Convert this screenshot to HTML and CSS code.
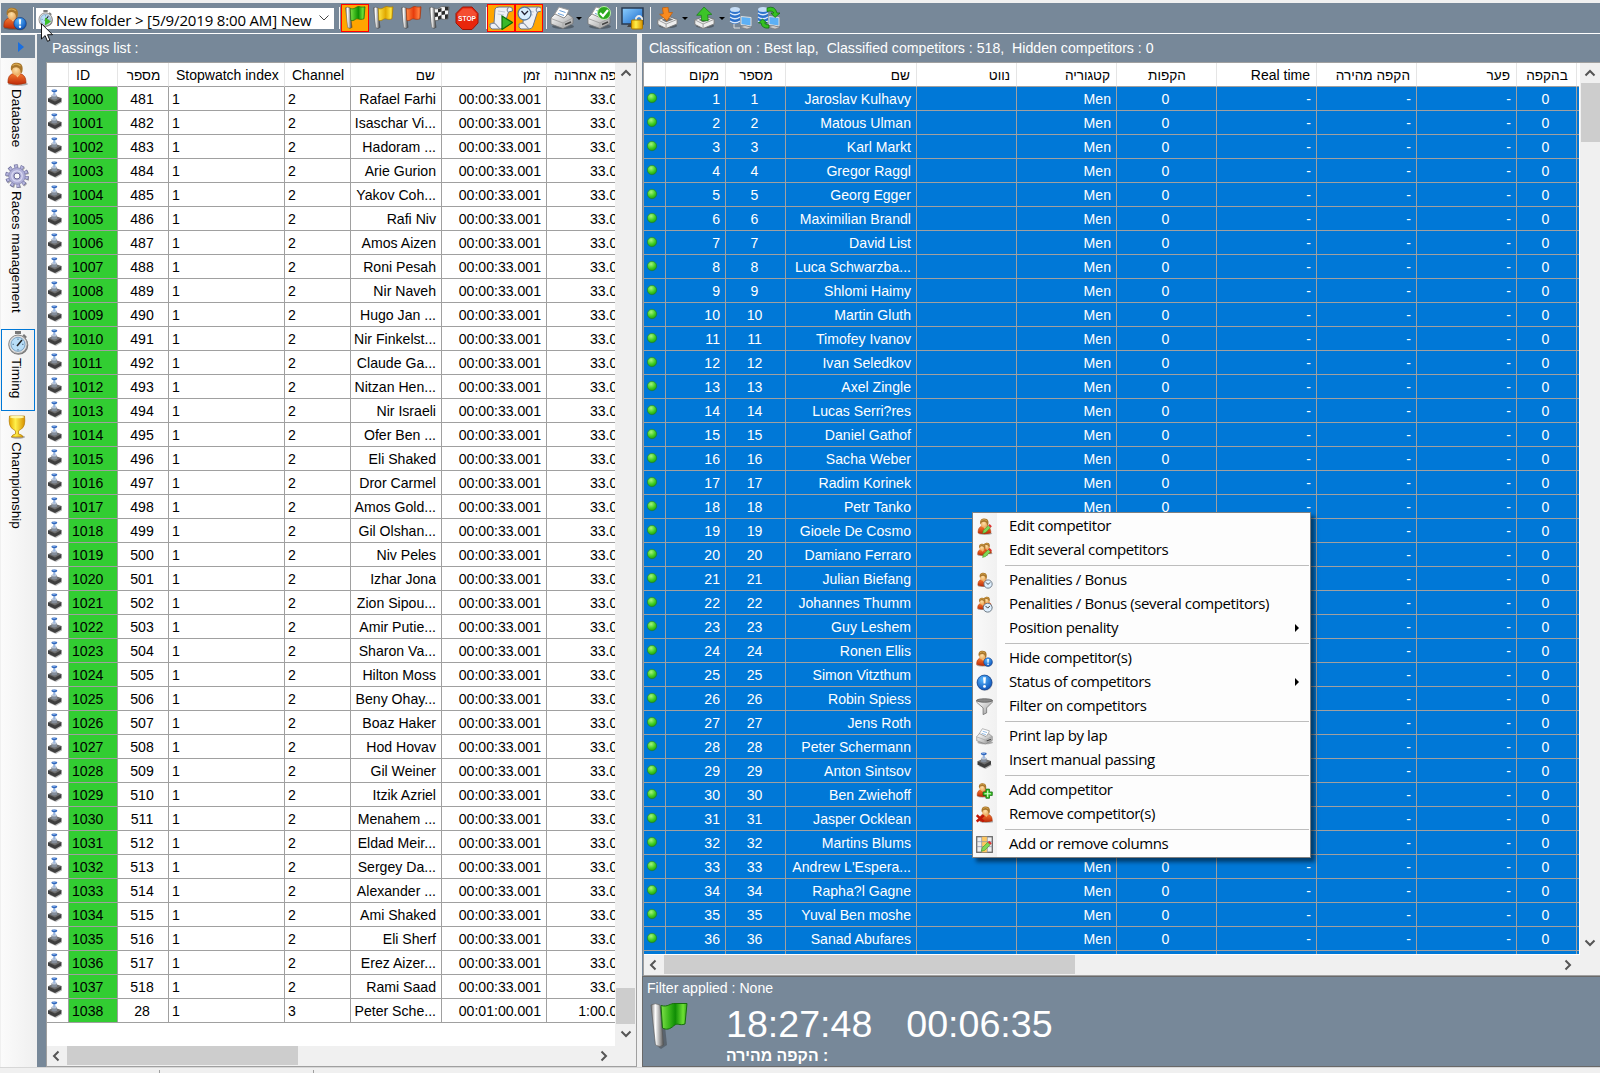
FILE: index.html
```
<!DOCTYPE html>
<html lang="en">
<head>
<meta charset="utf-8">
<title>Race timing</title>
<link rel="stylesheet" href="styles.css">
</head>
<body>
<svg class="defs" width="0" height="0" aria-hidden="true">
  <defs>
    <linearGradient id="gBody" x1="0" y1="0" x2="0" y2="1"><stop offset="0" stop-color="#f47a30"/><stop offset="1" stop-color="#c02a08"/></linearGradient>
    <radialGradient id="gFace" cx=".45" cy=".5" r=".6"><stop offset="0" stop-color="#fde0a8"/><stop offset="1" stop-color="#e8a050"/></radialGradient>
    <linearGradient id="gPole" x1="0" y1="0" x2="1" y2="0"><stop offset="0" stop-color="#777"/><stop offset=".35" stop-color="#fff"/><stop offset="1" stop-color="#555"/></linearGradient>
    <linearGradient id="gGreen" x1="0" y1="0" x2="1" y2="0"><stop offset="0" stop-color="#7fe04a"/><stop offset=".3" stop-color="#3cb81c"/><stop offset=".55" stop-color="#0f8d05"/><stop offset=".85" stop-color="#6de035"/><stop offset="1" stop-color="#38a81a"/></linearGradient>
    <linearGradient id="gYellow" x1="0" y1="0" x2="1" y2="0"><stop offset="0" stop-color="#ffe74a"/><stop offset=".5" stop-color="#e0a800"/><stop offset=".85" stop-color="#ffe440"/><stop offset="1" stop-color="#d9a400"/></linearGradient>
    <linearGradient id="gOrange" x1="0" y1="0" x2="1" y2="0"><stop offset="0" stop-color="#ff8a45"/><stop offset=".5" stop-color="#e83c0c"/><stop offset=".85" stop-color="#ff8040"/><stop offset="1" stop-color="#d84010"/></linearGradient>
    <radialGradient id="gBlue" cx=".4" cy=".3" r=".8"><stop offset="0" stop-color="#5ab8ff"/><stop offset="1" stop-color="#0548b0"/></radialGradient>
    <radialGradient id="gDot" cx=".4" cy=".3" r=".75"><stop offset="0" stop-color="#a4f57c"/><stop offset=".6" stop-color="#3fcc22"/><stop offset="1" stop-color="#1c9a10"/></radialGradient>
    <linearGradient id="gSteel" x1="0" y1="0" x2="1" y2="1"><stop offset="0" stop-color="#fff"/><stop offset="1" stop-color="#9a9a9a"/></linearGradient>
    <linearGradient id="gScreen" x1="0" y1="0" x2="1" y2="1"><stop offset="0" stop-color="#8ed0ff"/><stop offset="1" stop-color="#1766c8"/></linearGradient>
    <linearGradient id="gGold" x1="0" y1="0" x2="1" y2="0"><stop offset="0" stop-color="#e8a800"/><stop offset=".4" stop-color="#fff04a"/><stop offset="1" stop-color="#d89000"/></linearGradient>

    <symbol id="person" viewBox="0 0 24 24">
      <ellipse cx="13" cy="22" rx="10" ry="1.800" fill="#000" opacity=".3"/>
      <path d="M3 21c-.3-6 2-9 6-9.500h5c4.500.5 7 3.500 7 9.500q-9 3-18 0z" fill="url(#gBody)" stroke="#a83208" stroke-width=".7"/>
      <path d="M9.500 11.500l3 4 3-4z" fill="#f5c080"/>
      <ellipse cx="11.500" cy="7.500" rx="5" ry="6" fill="url(#gFace)"/>
      <path d="M6 8C5 2 9 .5 12 .7c5 .1 6.500 4 5.300 9-.8 2-1.500 2-1.700.8.1-3-1.600-5-4.300-5.200C8.500 5.500 7.500 6 7 8.500z" fill="#a8762c"/>
      <path d="M7.500 3.500q4-3 8 .5" stroke="#d8a850" stroke-width="1.200" fill="none"/>
    </symbol>
    <symbol id="alert" viewBox="0 0 24 24">
      <circle cx="12.500" cy="12.800" r="11" fill="#000" opacity=".25"/>
      <circle cx="12" cy="12" r="10.500" fill="url(#gBlue)" stroke="#0a3c8c"/>
      <path d="M10 4.500h4l-.7 9h-2.600z" fill="#fff"/><circle cx="12" cy="17.500" r="2" fill="#fff"/>
    </symbol>
    <symbol id="clock" viewBox="0 0 24 24">
      <circle cx="12" cy="12" r="10" fill="#dff0ff" stroke="#6a7682" stroke-width="2.200"/>
      <path d="M7 8l5 5 5-5" fill="none" stroke="#222" stroke-width="2"/>
    </symbol>
    <symbol id="people" viewBox="0 0 24 24">
      <use href="#person" x="7" y="0" width="17" height="18"/><use href="#person" x="0" y="1" width="18" height="20"/>
    </symbol>
    <symbol id="pencil" viewBox="0 0 24 24">
      <path d="M2 22l2-7L15 4l5 5L9 20z" fill="#7fd857" stroke="#2d8a18"/><path d="M15 4l3-3 5 5-3 3z" fill="#e03030"/>
    </symbol>
    <symbol id="flagpole" viewBox="0 0 24 24">
      <path d="M3.500 3.500L7 3l2.500 18.500-3 1.500z" fill="#000" opacity=".35"/>
      <path d="M2.500 1.800q2-1.200 4.500 0l1.500 19.700q-2 1.500-3.800 0z" fill="url(#gPole)" stroke="#555" stroke-width=".5"/>
    </symbol>
    <path id="cloth" d="M7.300 2.300c3.700 2 5.700-2 8.700-1.800 2.300.5 3.500.8 6 .3l-1 12c-5 1.700-6-1-8.500.5-2 1.500-3.500 1.500-4.700 1z"/>
    <symbol id="flag-green" viewBox="0 0 24 24"><use href="#flagpole"/><use href="#cloth" fill="url(#gGreen)" stroke="#17700c" stroke-width=".7"/></symbol>
    <symbol id="flag-yellow" viewBox="0 0 24 24"><use href="#flagpole"/><use href="#cloth" fill="url(#gYellow)" stroke="#a97c00" stroke-width=".7"/></symbol>
    <symbol id="flag-orange" viewBox="0 0 24 24"><use href="#flagpole"/><use href="#cloth" fill="url(#gOrange)" stroke="#a83408" stroke-width=".7"/></symbol>
    <symbol id="flag-check" viewBox="0 0 24 24"><use href="#flagpole"/><use href="#cloth" fill="#f4f4f4" stroke="#555" stroke-width=".7"/>
      <path d="M11 3l3.500-1v3.500L11 6.500zM18 .8l3.500.2v3.500L18 4.500zM7.700 6.500l3.300 0v4l-3 .5zM14.500 5.500L18 4.500v4l-3.500.5zM11 10.500l3.500-1.500v3.700l-3.500 1zM18 8.500l3-.2-.2 4.500-2.800.2z" fill="#2c2c2c"/></symbol>
    <symbol id="stop" viewBox="0 0 24 24">
      <path d="M7.500 1h9.500l6 6.500v9.500l-6 6.500h-9.500L1 17V7.500z" fill="#e8260c" stroke="#a01404"/>
      <path d="M8 2.500h8.500l5 5V10H2.500V8z" fill="#ff7050" opacity=".55"/>
      <text x="12" y="15" text-anchor="middle" font-family="Liberation Sans, sans-serif" font-size="7.500" font-weight="bold" fill="#fff" textLength="18" lengthAdjust="spacingAndGlyphs">STOP</text>
    </symbol>
    <symbol id="scroll" viewBox="0 0 24 24">
      <path d="M6 3q1-2 4-2h11q3 0 2.500 4l-4 1L15 20q-1 3-4 3H3q-3-1-2-5l4-1z" fill="#eef1f6" stroke="#6b7486"/>
      <path d="M1 18q4-2 6 .500t4 4.500M19 6q-2-3 1-4.700" fill="none" stroke="#8a93a5" stroke-width="1.200"/>
      <path d="M9 5l7 1M8.500 8l6.500 1" stroke="#c2c9d8"/>
    </symbol>
    <symbol id="scroll-play" viewBox="0 0 24 24"><use href="#scroll"/><path d="M13 10l10.500 6.500L13 23.500z" fill="#38b828" stroke="#0b6e08" stroke-width="1.200"/></symbol>
    <symbol id="scroll-clock" viewBox="0 0 24 24"><use href="#scroll" x="1" y="0"/><circle cx="7.500" cy="7.500" r="6.500" fill="#d8efff" stroke="#5a7898" stroke-width="1.300"/><path d="M4.500 5l3 3.500L11 5" fill="none" stroke="#223" stroke-width="1.300"/></symbol>
    <symbol id="printer" viewBox="0 0 24 24">
      <ellipse cx="13" cy="20.500" rx="11" ry="2.500" fill="#000" opacity=".3"/>
      <path d="M4 9l5-8 10 3-4 9z" fill="#fff" stroke="#999"/><path d="M9.500 4.500l6 2M8 7.500l6 2" stroke="#6aa0d8"/>
      <path d="M1 12l4-4 9 4 4-4 5 4v5.500L13 22.500 1 18z" fill="url(#gSteel)" stroke="#777" stroke-width=".8"/>
      <path d="M1 12.500l12 4.500 10-5" fill="none" stroke="#999" stroke-width=".8"/><path d="M13 17v5" stroke="#aaa"/>
      <path d="M15 18.500l6-2.500" stroke="#444" stroke-width="1.500"/>
    </symbol>
    <symbol id="printer-ok" viewBox="0 0 24 24"><use href="#printer"/><circle cx="17" cy="7" r="6.500" fill="#2ca81c" stroke="#b8f0a8"/><path d="M13 7l3 3 5-6" fill="none" stroke="#fff" stroke-width="2.200"/></symbol>
    <symbol id="display-lock" viewBox="0 0 24 24">
      <path d="M1 2h21v16H1z" fill="url(#gScreen)" stroke="#2a3a50" stroke-width="1.500"/><path d="M6 21l2-3h6v3z" fill="#444"/>
      <path d="M15 14v-2q3-4 6 0v2" fill="none" stroke="#eee" stroke-width="1.800"/><rect x="10.500" y="14" width="11" height="9" rx="1" fill="url(#gGold)" stroke="#a87800"/>
    </symbol>
    <symbol id="tray" viewBox="0 0 24 24">
      <ellipse cx="13" cy="20.500" rx="10" ry="2.500" fill="#000" opacity=".3"/>
      <path d="M2 14l11-4 10 3.500v5L11 23.500 2 19z" fill="#eee" stroke="#777"/><path d="M2 14l9 4.500 12-5M11 18.500v5" fill="none" stroke="#999"/><path d="M6 14l7-2.800 6 2.300-8 3z" fill="#777"/>
    </symbol>
    <symbol id="tray-down" viewBox="0 0 24 24"><use href="#tray"/><path d="M7 1l6-1 1 6h4l-6 9-8-7 4-.5z" fill="#f98a20" stroke="#c05c08" stroke-width=".8"/></symbol>
    <symbol id="tray-up" viewBox="0 0 24 24"><use href="#tray"/><path d="M12 0l8.500 8-4.500.5.500 6.500H9.500L9 9H4z" fill="#3cc428" stroke="#158010" stroke-width=".8"/></symbol>
    <symbol id="server" viewBox="0 0 24 24">
      <path d="M1 3v13q5 4 10 0V3z" fill="#2d72cc"/><ellipse cx="6" cy="3.500" rx="5" ry="2.500" fill="#c5dcf5"/>
      <path d="M1 7q5 3.500 10 0M1 11q5 3.500 10 0M1 15q5 3.500 10 0" fill="none" stroke="#dbe8f8" stroke-width="1.300"/>
      <path d="M12 10.500l10 1v8.500l-10-1.500z" fill="#5cb0f5" stroke="#ddd"/><path d="M11 21l5-1.500 7 2-5 1.500z" fill="#ccc" stroke="#777" stroke-width=".6"/>
    </symbol>
    <symbol id="server-net" viewBox="0 0 24 24"><use href="#server"/><path d="M5 18v4h6" fill="none" stroke="#ddd"/></symbol>
    <symbol id="server-sync" viewBox="0 0 24 24"><use href="#server"/><path d="M10 2q8-3 10 5h3l-5 4.500-4-4.500h3Q15 4 10 5.500z" fill="#35c020" stroke="#0c6c08" stroke-width=".7"/><path d="M12 22q-7 1-8-5H1.500l4-4 4.500 4H7.500q1 2 4.500 2z" fill="#35c020" stroke="#0c6c08" stroke-width=".7"/></symbol>
    <symbol id="gear" viewBox="0 0 24 24">
      <circle cx="12.800" cy="13" r="9.600" fill="none" stroke="#000" stroke-opacity=".3" stroke-width="4" stroke-dasharray="3.200 2.830"/>
      <circle cx="12" cy="12" r="9.600" fill="none" stroke="#6f6f9c" stroke-width="4.400" stroke-dasharray="3.400 2.630"/>
      <circle cx="12" cy="12" r="9.400" fill="none" stroke="#b4b4dc" stroke-width="3.200" stroke-dasharray="2.400 3.506" stroke-dashoffset="-.5"/>
      <circle cx="12" cy="12" r="8.300" fill="#b0b0d8" stroke="#7c7cac" stroke-width=".7"/><circle cx="12" cy="12" r="5.200" fill="none" stroke="#d8d8f2" stroke-width="1.300"/><circle cx="12" cy="12" r="3" fill="#f8f8f8" stroke="#6a6a98"/>
    </symbol>
    <symbol id="stopwatch" viewBox="0 0 24 24">
      <path d="M9 0h6v3H9zM18 3l3 3-2 1.500-2.500-3z" fill="#777"/>
      <circle cx="12.500" cy="14" r="9.800" fill="#777"/><circle cx="12" cy="13.300" r="9.300" fill="#dcdcdc" stroke="#888"/><circle cx="12" cy="13.300" r="7" fill="#b8def8" stroke="#7da4c4"/>
      <path d="M11 15l5-6" stroke="#222" stroke-width="1.500"/><path d="M12 7.500v1.500M12 18v1.500M6.500 13.300H8M16 13.300h1.500" stroke="#57728a"/>
    </symbol>
    <symbol id="trophy" viewBox="0 0 24 24">
      <ellipse cx="13" cy="22" rx="7" ry="1.800" fill="#000" opacity=".3"/>
      <path d="M4.500 1h15q1.500 11-4 13.500-1.500.7-2 1.500v3q4 .5 4.500 3H6.500q.5-2.500 4-3v-3q-.5-.8-2-1.500Q3 12 4.500 1z" fill="url(#gGold)" stroke="#b07800" stroke-width=".7"/><ellipse cx="12" cy="2" rx="7.200" ry="1.300" fill="#fff8a8"/>
    </symbol>
    <symbol id="button" viewBox="0 0 16 17">
      <path d="M2 14l7 3 6-3.500v-1z" fill="#000" opacity=".25"/>
      <path d="M1 9.300v3.500l7 3.200 6.500-3.500V9z" fill="#3e3e3e"/><path d="M1 9.300L7 6.500l7.500 2.500L8 12.500z" fill="#6e6e6e"/>
      <path d="M4.500 6h5.500v3.800q-2.800 1.600-5.500 0z" fill="#848e9c"/><ellipse cx="7.200" cy="6.200" rx="2.700" ry="1.200" fill="#c4ccd8"/><path d="M6.200 2.500h2.200v4H6.200z" fill="#9ab6e0"/><ellipse cx="7.300" cy="1.800" rx="3" ry="1.400" fill="#2f66bc"/><path d="M5.500 1.500h3" stroke="#8ab4f0" stroke-width=".7"/>
    </symbol>
    <symbol id="dot" viewBox="0 0 12 12"><circle cx="6" cy="6" r="4.700" fill="url(#gDot)" stroke="#1d7a2c" stroke-width=".6"/></symbol>
    <symbol id="funnel" viewBox="0 0 24 24"><path d="M1 3q11 4 22 0v3l-8 8v7l-5 2.500V14L1 6z" fill="url(#gSteel)" stroke="#666"/><ellipse cx="12" cy="3.500" rx="11" ry="2.500" fill="#888" stroke="#555"/></symbol>
    <symbol id="p-edit" viewBox="0 0 24 24"><use href="#person"/><use href="#pencil" x="8" y="8" width="15" height="15"/></symbol>
    <symbol id="pp-edit" viewBox="0 0 24 24"><use href="#people"/><use href="#pencil" x="8" y="8" width="15" height="15"/></symbol>
    <symbol id="p-clock" viewBox="0 0 24 24"><use href="#person" width="21" height="22"/><use href="#clock" x="10" y="10" width="14" height="14"/></symbol>
    <symbol id="pp-clock" viewBox="0 0 24 24"><use href="#people"/><use href="#clock" x="9" y="9" width="15" height="15"/></symbol>
    <symbol id="p-alert" viewBox="0 0 24 24"><use href="#person" x="-2" width="23" height="24"/><use href="#alert" x="10" y="10" width="14" height="14"/></symbol>
    <symbol id="p-add" viewBox="0 0 24 24"><use href="#person" x="-1" width="21" height="23"/><path d="M14 10h5v4h4v5h-4v4h-5v-4h-4v-5h4z" fill="#3cc428" stroke="#0c6008"/><path d="M16.500 12v9M12 16.500h9" stroke="#d8ffd0" stroke-width="1.500"/></symbol>
    <symbol id="p-remove" viewBox="0 0 24 24"><use href="#person" x="2"/><path d="M1 13l10 9M11 13L1 22" stroke="#c01808" stroke-width="3.500"/></symbol>
    <symbol id="columns" viewBox="0 0 24 24"><rect x="1" y="1" width="22" height="22" fill="#eee" stroke="#666" stroke-width="1.800"/><path d="M8 1h8v22H8z" fill="#ffc860"/><path d="M1 8h22M1 15h22M8 1v22M16 1v22" stroke="#8890a8"/><use href="#pencil" x="6" y="6" width="17" height="17"/></symbol>
    <symbol id="chev-up" viewBox="0 0 12 12"><path d="M1.500 8.500L6 4l4.500 4.500" fill="none" stroke="#555" stroke-width="2"/></symbol>
    <symbol id="chev-down" viewBox="0 0 12 12"><path d="M1.500 3.500L6 8l4.500-4.500" fill="none" stroke="#555" stroke-width="2"/></symbol>
    <symbol id="chev-left" viewBox="0 0 12 12"><path d="M8.500 1.500L4 6l4.500 4.500" fill="none" stroke="#555" stroke-width="2"/></symbol>
    <symbol id="chev-right" viewBox="0 0 12 12"><path d="M3.500 1.500L8 6l-4.500 4.500" fill="none" stroke="#555" stroke-width="2"/></symbol>
  </defs>
</svg>

<div class="app">
  <header class="toolbar">
    <svg class="tool-alert"><use href="#p-alert"/></svg>
    <span class="sep"></span>
    <div class="combo">
      <svg class="combo-icon"><use href="#stopwatch"/><path d="M8 7.500l6 4-6 4z" fill="#3cc028"/></svg>
      <span class="combo-text">New folder &gt; [5/9/2019 8:00 AM] New</span>
      <svg class="combo-chev" viewBox="0 0 10 6"><path d="M.5.5L5 5 9.500.5" fill="none" stroke="#444"/></svg>
    </div>
    <span class="sep sep-combo"></span>
    <span class="tool active"><svg class="i24"><use href="#flag-green"/></svg></span>
    <span class="tool"><svg class="i24"><use href="#flag-yellow"/></svg></span>
    <span class="tool"><svg class="i24"><use href="#flag-orange"/></svg></span>
    <span class="tool"><svg class="i24"><use href="#flag-check"/></svg></span>
    <span class="tool"><svg class="i24"><use href="#stop"/></svg></span>
    <span class="sep sep-tight"></span>
    <span class="tool active"><svg class="i24"><use href="#scroll-play"/></svg></span>
    <span class="tool active"><svg class="i24"><use href="#scroll-clock"/></svg></span>
    <span class="sep sep-print"></span>
    <span class="tool"><svg class="i24"><use href="#printer"/></svg></span>
    <span class="caret caret-print"></span>
    <span class="tool"><svg class="i24"><use href="#printer-ok"/></svg></span>
    <span class="sep sep-lock"></span>
    <span class="tool"><svg class="i24"><use href="#display-lock"/></svg></span>
    <span class="sep sep-tray"></span>
    <span class="tool"><svg class="i22"><use href="#tray-down"/></svg></span>
    <span class="caret caret-tray"></span>
    <span class="tool"><svg class="i22"><use href="#tray-up"/></svg></span>
    <span class="caret caret-tray"></span>
    <span class="tool"><svg class="i24"><use href="#server-net"/></svg></span>
    <span class="tool"><svg class="i24"><use href="#server-sync"/></svg></span>
  </header>

  <div class="main">
    <nav class="side">
      <div class="side-head"><span class="side-arrow"></span></div>
      <div class="tab tab-db"><svg class="i24"><use href="#person"/></svg><span>Database</span></div>
      <div class="tab tab-races"><svg class="i24"><use href="#gear"/></svg><span>Races management</span></div>
      <div class="tab tab-timing"><svg class="i24"><use href="#stopwatch"/></svg><span>Timing</span></div>
      <div class="tab tab-champ"><svg class="i24"><use href="#trophy"/></svg><span>Championship</span></div>
    </nav>

    <section class="panel passings">
      <h2 class="panel-title">Passings list :</h2>
      <div class="frame">
        <div class="viewport">
          <div class="grid-body" id="passings">
            <div class="row head">
              <div></div><div>ID</div><div class="c he">מספר</div><div>Stopwatch index</div><div>Channel</div><div class="r he">שם</div><div class="r he">זמן</div><div class="r he">הקפה אחרונה</div>
            </div>
          </div>
        </div>
        <div class="vbar"><svg class="chev"><use href="#chev-up"/></svg><span class="fill"></span><span class="vthumb"></span><svg class="chev"><use href="#chev-down"/></svg></div>
        <div class="hbar"><svg class="chev"><use href="#chev-left"/></svg><span class="hthumb"></span><svg class="chev"><use href="#chev-right"/></svg></div>
      </div>
    </section>

    <section class="panel results">
      <h2 class="panel-title">Classification on : Best lap,&nbsp; Classified competitors : 518,&nbsp; Hidden competitors : 0</h2>
      <div class="frame">
        <div class="viewport">
          <div class="grid-body" id="results">
            <div class="row head">
              <div></div><div class="r he">מקום</div><div class="c he">מספר</div><div class="r he">שם</div><div class="r he">נווט</div><div class="r he">קטגוריה</div><div class="c he">הקפות</div><div class="r">Real time</div><div class="r he">הקפה מהירה</div><div class="r he">פער</div><div class="c he">בהקפה</div><div></div>
            </div>
          </div>
        </div>
        <div class="vbar"><svg class="chev"><use href="#chev-up"/></svg><span class="vthumb"></span><span class="fill"></span><svg class="chev"><use href="#chev-down"/></svg></div>
        <div class="hbar"><svg class="chev"><use href="#chev-left"/></svg><span class="hthumb"></span><svg class="chev"><use href="#chev-right"/></svg></div>
      </div>
      <div class="clockbar">
        <div class="filter">Filter applied : None</div>
        <div class="clock-row">
          <svg class="bigflag" viewBox="0 0 38 46">
            <path d="M5 4h8l4 38-6 4-4-3z" fill="#222" opacity=".35"/>
            <path d="M1 2q4-2.500 9 0l3.500 40q-3.500 3-8 0z" fill="url(#gPole)" stroke="#555" stroke-width=".6"/>
            <path d="M11 2.500c7 2 9-2.500 14-2h12l-2 20.500c-6 2-7-1.500-11 1.500-4 4-8 4.500-11.500 2.500z" fill="url(#gGreen)" stroke="#176e0c"/>
          </svg>
          <span class="time">18:27:48</span><span class="time elapsed">00:06:35</span>
        </div>
        <div class="best">הקפה מהירה :</div>
      </div>
    </section>
  </div>
  <footer class="status"><span></span><span></span></footer>
</div>

<div class="menu">
  <div class="item"><svg><use href="#p-edit"/></svg><span>Edit competitor</span></div>
  <div class="item"><svg><use href="#pp-edit"/></svg><span>Edit several competitors</span></div>
  <hr>
  <div class="item"><svg><use href="#p-clock"/></svg><span>Penalities / Bonus</span></div>
  <div class="item"><svg><use href="#pp-clock"/></svg><span>Penalities / Bonus (several competitors)</span></div>
  <div class="item"><svg></svg><span>Position penality</span><i class="sub"></i></div>
  <hr>
  <div class="item"><svg><use href="#p-alert"/></svg><span>Hide competitor(s)</span></div>
  <div class="item"><svg><use href="#alert"/></svg><span>Status of competitors</span><i class="sub"></i></div>
  <div class="item"><svg><use href="#funnel"/></svg><span>Filter on competitors</span></div>
  <hr>
  <div class="item"><svg><use href="#printer"/></svg><span>Print lap by lap</span></div>
  <div class="item"><svg><use href="#button"/></svg><span>Insert manual passing</span></div>
  <hr>
  <div class="item"><svg><use href="#p-add"/></svg><span>Add competitor</span></div>
  <div class="item"><svg><use href="#p-remove"/></svg><span>Remove competitor(s)</span></div>
  <hr>
  <div class="item"><svg><use href="#columns"/></svg><span>Add or remove columns</span></div>
</div>
<svg class="pointer" viewBox="0 0 12 19"><path d="M.5.700v15.300l3.600-3.400 2.400 5.700 2.400-1-2.400-5.600h5z" fill="#fff" stroke="#000" stroke-width=".9"/></svg>
<script src="app.js"></script>
</body>
</html>
```
FILE: styles.css
```
* { box-sizing: border-box; }
body { margin: 0; background: #f0f0f0; font-family: "Liberation Sans", Arial, sans-serif; font-size: 14.1px; color: #000; overflow: hidden; }
svg { display: block; flex: none; }
.defs { position: absolute; }
.app { width: 1600px; height: 1073px; display: flex; flex-direction: column; padding-top: 3px; }
.i24 { width: 24px; height: 24px; }
.i22 { width: 22px; height: 22px; }

.toolbar { height: 31px; margin-left: 1px; background: #778899; border-bottom: 1px solid #fff; display: flex; align-items: center; flex: none; }
.tool-alert { width: 24px; height: 25px; margin-left: 2px; }
.sep { width: 1px; height: 22px; background: #f4f4f4; margin-left: 6px; flex: none; }
.combo { width: 298px; height: 21px; margin-left: 2px; background: #fff; display: flex; align-items: center; overflow: hidden; flex: none; }
.combo-icon { width: 17px; height: 17px; margin-left: 1px; }
.combo-text { font: 15px/20px "Open Sans", "Noto Sans", sans-serif; width: 262px; margin: 3px 0 0 2px; white-space: nowrap; letter-spacing: -.16px; }
.combo-chev { width: 10px; height: 6px; margin-left: 1px; }
.sep-combo { margin-left: 5px; margin-right: 1px; }
.sep-tight { margin-left: 5px; }
.sep-print { margin-left: 3px; margin-right: 1px; }
.sep-lock { margin-left: 3px; margin-right: 2px; }
.sep-tray { margin-left: 3px; margin-right: 2px; }
.tool { width: 28px; height: 28px; display: flex; align-items: center; justify-content: center; border: 1px solid transparent; flex: none; }
.tool.active { background: #ffa500; border-color: #f00; }
.caret { border: 3px solid transparent; border-top-color: #000; border-bottom: 0; width: 6px; }
.caret-print { margin: 0 3px 0 0; }
.caret-tray { margin: 0 2px 0 1px; }

.main { display: flex; height: 1033px; flex: none; }
.side { width: 35px; margin-right: 2px; border-left: 1px solid #f0f0f0; background: linear-gradient(90deg, #fbfbfb, #f0f0f0); display: flex; flex-direction: column; padding-top: 1px; }
.side-head { height: 23px; background: #778899; display: flex; justify-content: flex-end; align-items: center; padding-right: 11px; }
.side-arrow { border-left: 6px solid #1a6fe0; border-top: 5px solid transparent; border-bottom: 5px solid transparent; }
.tab { display: flex; flex-direction: column; align-items: center; padding-right: 2px; }
.tab span { writing-mode: vertical-rl; font-size: 13.6px; line-height: 18px; margin-top: 3px; margin-right: 3px; white-space: nowrap; }
.tab-db { padding-top: 4px; height: 102px; }
.tab-races { padding-top: 4px; height: 169px; }
.tab-timing { height: 82px; border: 1px solid #0078d7; padding-right: 1px; padding-top: 1px; }
.tab-champ { padding-top: 4px; }

.panel { background: #778899; display: flex; flex-direction: column; }
.panel-title { margin: 0; font-weight: normal; font-size: 14.15px; line-height: 27px; height: 28px; padding-top: 1px; color: #fff; white-space: nowrap; flex: none; }
.passings { width: 600px; padding-left: 9px; margin-right: 5px; }
.passings .panel-title { padding-left: 6px; }
.results { width: 958px; }
.results .panel-title { padding-left: 7px; }
.frame { display: grid; border: 1px solid #a0a0a0; background: #f0f0f0; flex: none; }
.passings .frame { height: 1005px; grid-template: 983px 20px / 569px 20px; }
.results .frame { height: 914px; margin-left: 1px; border-right: 0; grid-template: 892px 20px / 936px 20px; }
.viewport { background: #fff; overflow: hidden; }
.passings .viewport { margin-right: 1px; }
.results .viewport { border-right: 1px solid #fff; border-bottom: 1px solid #fff; }
.row { display: grid; height: 24px; }
.row > div { border-right: 1px solid #a0a0a0; border-bottom: 1px solid #a0a0a0; line-height: 23px; padding: 1px 5px 0 3px; white-space: nowrap; overflow: hidden; height: 24px; }
.passings .row { grid-template-columns: 22px 49px 51px 116px 66px 91px 105px 92px; width: 592px; }
.results .row { grid-template-columns: 22px 60px 60px 131px 100px 100px 100px 100px 100px 100px 60px 10px; width: 943px; }
.row > .c { text-align: center; padding-left: 4px; padding-right: 6px; }
.row > .r { text-align: right; }
.row.head > div { padding: 1px 6px 0 7px; border-right-color: #e5e5e5; font-size: 14px; }
.row.head > .he { font-size: 13.6px; }
.row > .id { background: #32cd32; }
.row > .ico { padding: 2px 0 0 0; }
.ico svg { width: 16px; height: 17px; }
.results .line { background: #0078d7; color: #fff; }
.results .ico { padding: 5px 0 0 2px; }
.results .ico svg { width: 12px; height: 12px; }
.chev { width: 12px; height: 12px; }
.vbar { display: flex; flex-direction: column; align-items: center; padding: 4px 0 6px; }
.passings .vbar { padding-right: 1px; }
.vthumb { width: 19px; background: #cdcdcd; }
.fill { flex: 1; }
.passings .vthumb { height: 36px; margin-bottom: 4px; }
.results .vthumb { height: 59px; margin-top: 4px; }
.hbar { display: flex; align-items: center; padding: 0 0 1px 3px; }
.hthumb { height: 19px; background: #cdcdcd; }
.passings .hthumb { width: 231px; margin: 0 300px 0 5px; }
.results .hthumb { width: 411px; margin: 0 487px 0 5px; }

.clockbar { flex: 1; border: 1px solid #696969; border-right: 0; color: #fff; padding: 2px 0 0 4px; }
.filter { line-height: 18px; }
.clock-row { display: flex; align-items: center; height: 48px; margin-top: 3px; }
.bigflag { width: 38px; height: 46px; margin: 3px 0 0 3px; }
.time { font-size: 37.6px; line-height: 44px; margin-left: 38px; }
.time.elapsed { margin-left: 34px; }
.best { font-weight: bold; font-size: 15.8px; line-height: 16px; padding-left: 79px; }
.status { flex: 1; border-top: 1px solid #d7d7d7; display: flex; padding-top: 2px; }
.status span { border-right: 1px solid #a0a0a0; width: 160px; }
.status span + span { width: 154px; }

.menu { position: absolute; left: 972px; top: 512px; width: 339px; height: 346px; border: 1px solid #808080; padding: 1px 1px 0 0; background: linear-gradient(90deg, #fafafa, #f1f1f1) 0 0 / 24px 100% no-repeat #fdfdfd; box-shadow: 4px 4px 4px rgba(0,0,0,.5); font: 15px/22px "Open Sans", "Noto Sans", sans-serif; }
.item { display: flex; align-items: center; height: 24px; padding-left: 3px; }
.item svg { width: 17px; height: 17px; }
.item span { margin-left: 16px; padding-bottom: 2px; white-space: nowrap; letter-spacing: -.39px; }
.sub { margin-left: auto; margin-right: 10px; border-left: 4px solid #000; border-top: 4px solid transparent; border-bottom: 4px solid transparent; }
.menu hr { height: 1px; border: 0; background: #bdbdbd; margin: 3px 0 2px 32px; }
.pointer { position: absolute; left: 41px; top: 23px; width: 12px; height: 19px; }
```
FILE: app.js
```
const passingNames = ["Rafael Farhi","Isaschar Vi...","Hadoram ...","Arie Gurion","Yakov Coh...","Rafi Niv","Amos Aizen","Roni Pesah","Nir Naveh","Hugo Jan ...","Nir Finkelst...","Claude Ga...","Nitzan Hen...","Nir Israeli","Ofer Ben ...","Eli Shaked","Dror Carmel","Amos Gold...","Gil Olshan...","Niv Peles","Izhar Jona","Zion Sipou...","Amir Putie...","Sharon Va...","Hilton Moss","Beny Ohay...","Boaz Haker","Hod Hovav","Gil Weiner","Itzik Azriel","Menahem ...","Eldad Meir...","Sergey Da...","Alexander ...","Ami Shaked","Eli Sherf","Erez Aizer...","Rami Saad","Peter Sche..."];
const resultNames = ["Jaroslav Kulhavy","Matous Ulman","Karl Markt","Gregor Raggl","Georg Egger","Maximilian Brandl","David List","Luca Schwarzba...","Shlomi Haimy","Martin Gluth","Timofey Ivanov","Ivan Seledkov","Axel Zingle","Lucas Serri?res","Daniel Gathof","Sacha Weber","Radim Korinek","Petr Tanko","Gioele De Cosmo","Damiano Ferraro","Julian Biefang","Johannes Thumm","Guy Leshem","Ronen Ellis","Simon Vitzthum","Robin Spiess","Jens Roth","Peter Schermann","Anton Sintsov","Ben Zwiehoff","Jasper Ocklean","Martins Blums","Andrew L'Espera...","Rapha?l Gagne","Yuval Ben moshe","Sanad Abufares"];

const icon = name => `<div class="ico"><svg><use href="#${name}"/></svg></div>`;
const cell = (text, cls = "") => `<div class="${cls}">${text}</div>`;
const line = cells => `<div class="row line">${cells.join("")}</div>`;

document.getElementById("passings").insertAdjacentHTML("beforeend", passingNames.map((name, i) => {
  const last = i === passingNames.length - 1;
  return line([icon("button"), cell(1000 + i, "id"), cell(last ? 28 : 481 + i, "c"), cell(1), cell(last ? 3 : 2),
    cell(name, "r"), cell(last ? "00:01:00.001" : "00:00:33.001", "r"), cell(last ? "1:00.001" : "33.001", "r")]);
}).join(""));

const resultLines = resultNames.map((name, i) => line([icon("dot"), cell(i + 1, "r"), cell(i + 1, "c"), cell(name, "r"),
  cell(""), cell("Men", "r"), cell(0, "c"), cell("-", "r"), cell("-", "r"), cell("-", "r"), cell(0, "c"), cell("")]));
resultLines.push(line(Array(12).fill(cell(""))));
document.getElementById("results").insertAdjacentHTML("beforeend", resultLines.join(""));
```
